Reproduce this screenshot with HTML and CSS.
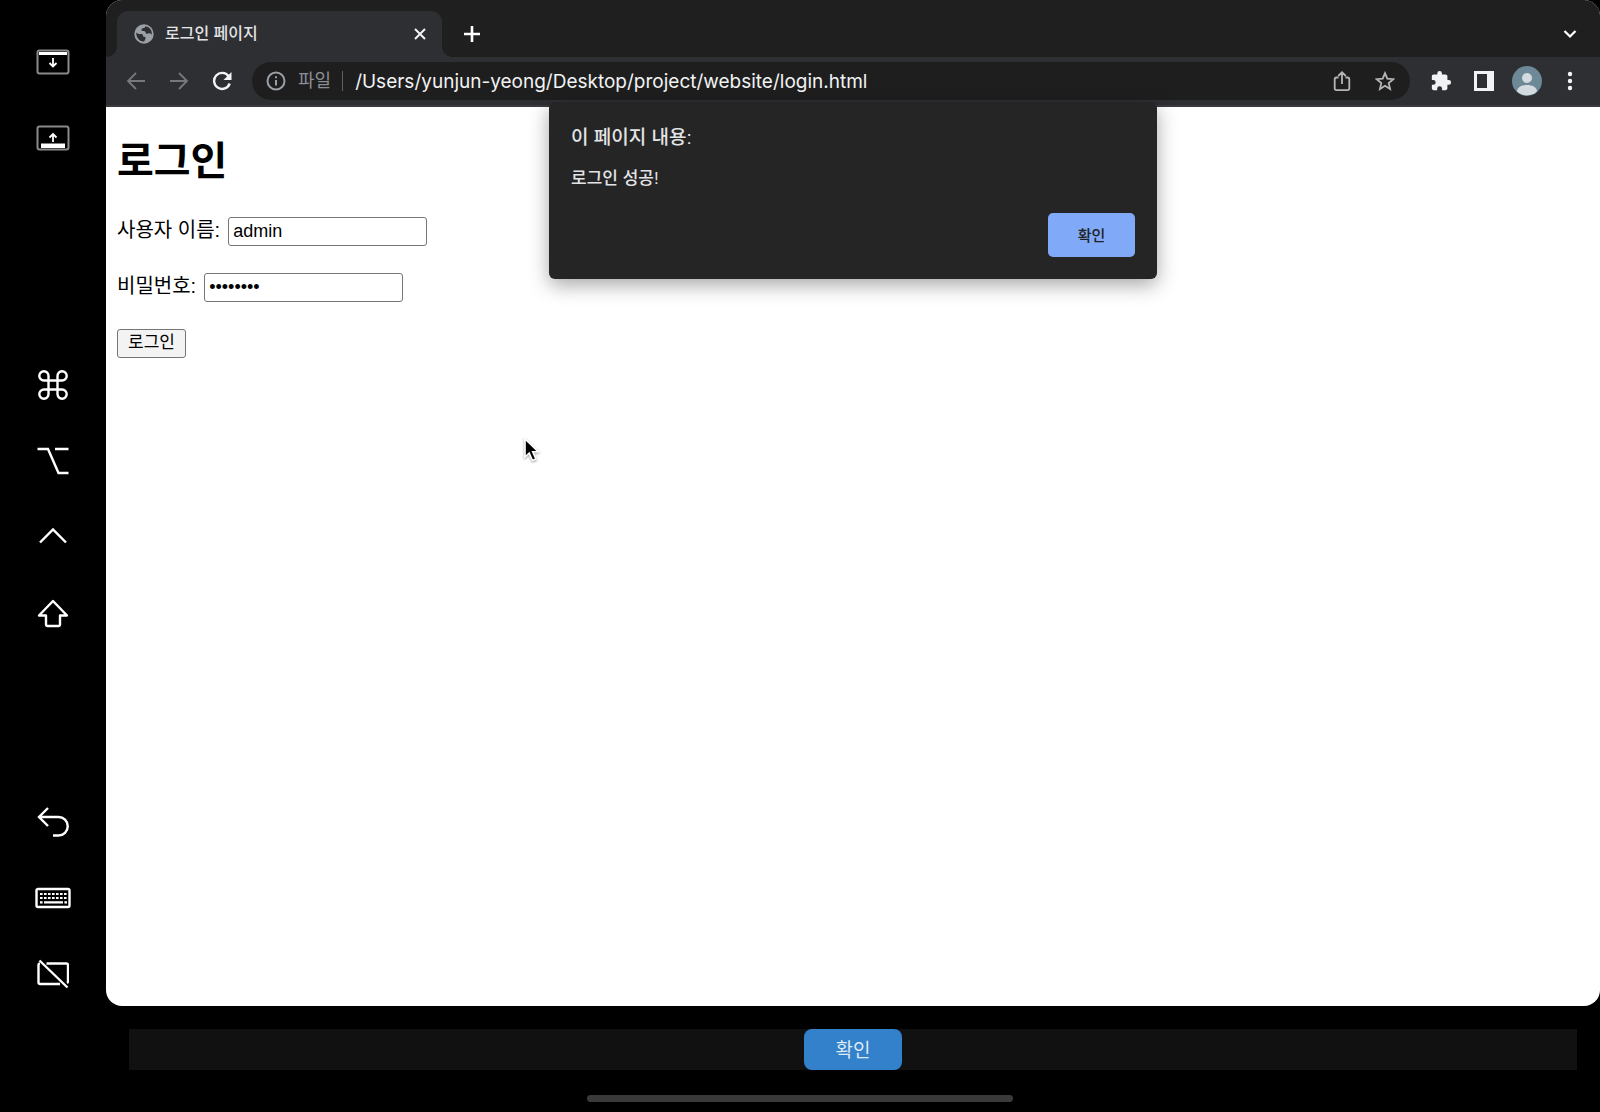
FILE: index.html
```html
<!DOCTYPE html>
<html lang="ko">
<head>
    <meta charset="UTF-8">
    <meta name="viewport" content="width=device-width, initial-scale=1.0">
    <title>로그인 페이지</title>
    <link rel="stylesheet" href="styles.css">
</head>
<body>
    <div class="device">
        <nav class="sidebar">
            <div class="key-group">
                <button class="key" aria-label="메뉴 막대">
                    <svg width="34" height="26" viewBox="0 0 34 26" fill="none">
                        <rect x="1.5" y="1.5" width="31" height="23" rx="2" stroke="#8a8a8a" stroke-width="2"/>
                        <path d="M3 3h28v3H3z" fill="#fff"/>
                        <path d="M17 9v8M13.5 14l3.500 3.500 3.500-3.500" stroke="#fff" stroke-width="1.8"/>
                    </svg>
                </button>
                <button class="key" aria-label="Dock">
                    <svg width="34" height="26" viewBox="0 0 34 26" fill="none">
                        <rect x="1.500" y="1.500" width="31" height="23" rx="2" stroke="#8a8a8a" stroke-width="2"/>
                        <path d="M5 18.500h24v4.500H5z" fill="#fff"/>
                        <path d="M17 17V9M13.500 12.500L17 9l3.500 3.500" stroke="#fff" stroke-width="1.8"/>
                    </svg>
                </button>
            </div>
            <div class="key-group modifiers">
                <button class="key" aria-label="Command">
                    <svg width="32" height="32" viewBox="0 0 32 32" fill="none" stroke="#fff" stroke-width="2.4">
                        <path d="M11.500 11.500h9v9h-9zM11.500 11.500H7A4.600 4.600 0 1 1 11.500 7zM20.500 11.500V7a4.600 4.600 0 1 1 4.500 4.500zM20.500 20.500H25a4.600 4.600 0 1 1-4.500 4.500zM11.500 20.500V25A4.600 4.600 0 1 1 7 20.500z"/>
                    </svg>
                </button>
                <button class="key" aria-label="Option">
                    <svg width="32" height="30" viewBox="0 0 32 30" fill="none" stroke="#fff" stroke-width="2.4">
                        <path d="M.5 3h10.500l10.500 24h10M18 3h13.500"/>
                    </svg>
                </button>
                <button class="key" aria-label="Control">
                    <svg width="28" height="20" viewBox="0 0 28 20" fill="none" stroke="#fff" stroke-width="2.4">
                        <path d="M1 15.500L14 2.500l13 13"/>
                    </svg>
                </button>
                <button class="key" aria-label="Shift">
                    <svg width="32" height="30" viewBox="0 0 32 30" fill="none" stroke="#fff" stroke-width="2.4" stroke-linejoin="round">
                        <path d="M16 3L30 17.500h-7V26.500a1.500 1.500 0 0 1-1.500 1.500h-11A1.500 1.500 0 0 1 9 26.500v-9H2z"/>
                    </svg>
                </button>
            </div>
            <div class="key-group tools">
                <button class="key" aria-label="실행 취소">
                    <svg width="32" height="32" viewBox="0 0 32 32" fill="none" stroke="#fff" stroke-width="2.4">
                        <path d="M11 2L2 11l9 9M2 11h19.500a9 9 0 0 1 0 18.500H16"/>
                    </svg>
                </button>
                <button class="key" aria-label="키보드">
                    <svg width="36" height="22" viewBox="0 0 36 22" fill="none" stroke="#fff">
                        <rect x="1.500" y="2" width="33" height="18" rx="1.500" stroke-width="2.4"/>
                        <path d="M5 7h27M5 11h27" stroke-width="2.200" stroke-dasharray="2.600 1.400"/>
                        <path d="M5 15.300h2.600M9 15.300h19M29.400 15.300H32" stroke-width="2.200"/>
                    </svg>
                </button>
                <button class="key" aria-label="화면 연결 해제">
                    <svg width="32" height="30" viewBox="0 0 32 30" fill="none" stroke="#fff" stroke-width="2.4">
                        <path d="M9.500 4.500H29.500a1.500 1.500 0 0 1 1.500 1.500V22a2 2 0 0 1-1 2M23 25H3a1.500 1.500 0 0 1-1.500-1.500V6A1.500 1.500 0 0 1 3 4.500M2.500 1.500l28 27"/>
                    </svg>
                </button>
            </div>
        </nav>

        <div class="main">
            <div class="browser">
                <div class="tab-strip">
                    <div class="tab">
                        <svg width="20" height="20" viewBox="0 0 20 20">
                            <circle cx="10" cy="10" r="9.700" fill="#9aa0a6"/>
                            <path d="M2.200 8.500c1.500 1.400 3 1.700 4.800 1.600 1 0 1.800.4 1.900 1.400 0 1 .6 1.300 1.600 1.300.9.100 1.200.7 1 1.600-.2 1.100-.9 1.600-1.300 3.200C5.500 17.500 2.200 14 2.200 8.500zM11.500 2.300c-.3 1.300-1.200 1.900-2.600 2-1.300.1-1.500 1-1.300 1.900.2.800 1.200.8 2.200.8 1.300 0 1.700.8 2 1.900.3 1 1.400 1 2.300.6 1.200-.5 2.200-.3 3.700 1.200C18.300 6.500 15.700 3 11.500 2.300z" fill="#2e2f33"/>
                        </svg>
                        <span class="tab-title">로그인 페이지</span>
                        <button class="icon-btn tab-close" aria-label="탭 닫기">
                            <svg width="12" height="12" viewBox="0 0 12 12" stroke="#f1f3f4" stroke-width="2"><path d="M1 1l10 10M11 1L1 11"/></svg>
                        </button>
                    </div>
                    <button class="icon-btn new-tab" aria-label="새 탭">
                        <svg width="18" height="18" viewBox="0 0 18 18" stroke="#fff" stroke-width="2.600"><path d="M9 1v16M1 9h16"/></svg>
                    </button>
                    <button class="icon-btn tab-search" aria-label="탭 검색">
                        <svg width="14" height="10" viewBox="0 0 14 10" fill="none" stroke="#fff" stroke-width="2.200"><path d="M1.500 2L7 7.500 12.500 2"/></svg>
                    </button>
                </div>

                <div class="toolbar">
                    <button class="icon-btn tool" aria-label="뒤로">
                        <svg width="20" height="20" viewBox="0 0 20 20" fill="none" stroke="#77787b" stroke-width="1.800"><path d="M19 10H2M10 2L2 10l8 8"/></svg>
                    </button>
                    <button class="icon-btn tool" aria-label="앞으로">
                        <svg width="20" height="20" viewBox="0 0 20 20" fill="none" stroke="#77787b" stroke-width="1.800"><path d="M1 10h17M10 2l8 8-8 8"/></svg>
                    </button>
                    <button class="icon-btn tool" aria-label="새로고침">
                        <svg width="20" height="20" viewBox="0 0 20 20" fill="none"><path d="M16.600 5.200A8 8 0 1 0 17.700 12.500" stroke="#f1f3f4" stroke-width="2.400"/><path d="M19.500 1v8h-8z" fill="#f1f3f4"/></svg>
                    </button>
                    <div class="omnibox">
                        <svg width="20" height="20" viewBox="0 0 20 20" fill="none" stroke="#9aa0a6" stroke-width="2"><circle cx="10" cy="10" r="8.500"/><path d="M10 9v5.500M10 5.300v2"/></svg>
                        <label class="scheme" for="address">파일</label>
                        <input class="address" id="address" type="text" value="/Users/yunjun-yeong/Desktop/project/website/login.html">
                        <button class="icon-btn tool" aria-label="공유">
                            <svg width="18" height="22" viewBox="0 0 18 22" fill="none" stroke="#b4b5b7" stroke-width="1.800"><path d="M5.500 7.500H3.500A1.800 1.800 0 0 0 1.700 9.300v9a1.800 1.800 0 0 0 1.800 1.800h11a1.800 1.800 0 0 0 1.800-1.800v-9a1.800 1.800 0 0 0-1.800-1.800h-2M9 14V2.500M5.200 6L9 2.200 12.800 6"/></svg>
                        </button>
                        <button class="icon-btn tool" aria-label="북마크">
                            <svg width="20" height="20" viewBox="0 0 20 20" fill="none" stroke="#b4b5b7" stroke-width="1.800"><path d="M10 2.200l2.300 5.500 6 .5-4.600 3.900 1.400 5.900-5.100-3.200L4.900 18l1.400-5.900L1.700 8.200l6-.5z"/></svg>
                        </button>
                    </div>
                    <button class="icon-btn tool" aria-label="확장 프로그램">
                        <svg width="22" height="22" viewBox="0 0 24 24" fill="#f1f3f4"><path d="M20.500 11H19V7c0-1.100-.9-2-2-2h-4V3.500a2.500 2.500 0 0 0-5 0V5H4c-1.100 0-2 .9-2 2v3.800h1.500a2.700 2.700 0 0 1 0 5.400H2V20c0 1.100.9 2 2 2h3.800v-1.500a2.700 2.700 0 0 1 5.400 0V22H17c1.100 0 2-.9 2-2v-4h1.500a2.500 2.500 0 0 0 0-5z"/></svg>
                    </button>
                    <button class="icon-btn tool" aria-label="측면 패널">
                        <svg width="20" height="20" viewBox="0 0 20 20"><path d="M0 0h20v20H0zM3 3v14h10V3z" fill="#f1f3f4" fill-rule="evenodd"/></svg>
                    </button>
                    <button class="icon-btn tool" aria-label="프로필">
                        <svg width="30" height="30" viewBox="0 0 30 30"><circle cx="15" cy="15" r="15" fill="#6d8896"/><circle cx="15" cy="12" r="5" fill="#d3dbe0"/><path d="M5 25.500c0-4.500 5-6.500 10-6.500s10 2 10 6.500a15 15 0 0 1-20 0z" fill="#d3dbe0"/></svg>
                    </button>
                    <button class="icon-btn tool" aria-label="메뉴">
                        <svg width="6" height="20" viewBox="0 0 6 20" fill="#f1f3f4"><circle cx="3" cy="3" r="2.200"/><circle cx="3" cy="10" r="2.200"/><circle cx="3" cy="17" r="2.200"/></svg>
                    </button>
                </div>

                <div class="page">
                    <h1>로그인</h1>
                    <form class="login-form">
                        <div class="field">
                            <label for="username">사용자 이름:</label>
                            <input type="text" id="username" value="admin">
                        </div>
                        <div class="field">
                            <label for="password">비밀번호:</label>
                            <input type="password" id="password" value="password">
                        </div>
                        <button type="button" class="login-button">로그인</button>
                    </form>

                    <div class="alert" role="alertdialog" aria-labelledby="alertTitle">
                        <h2 id="alertTitle">이 페이지 내용:</h2>
                        <p>로그인 성공!</p>
                        <button type="button" class="alert-button">확인</button>
                    </div>

                    <svg class="cursor" width="18" height="28" viewBox="0 0 18 28">
                        <path d="M2 2v18l4.200-4 3.300 7.500 3.400-1.500-3.200-7.300h5.500z" fill="#000" stroke="#fff" stroke-width="1.600"/>
                    </svg>
                </div>
            </div>

            <div class="touch-bar">
                <button type="button" class="touch-button">확인</button>
            </div>
        </div>
    </div>
    <div class="home-indicator"></div>
</body>
</html>
```
FILE: styles.css
```css
:root {
    --strip-color: #1f1f1f;
    --toolbar-color: #2e2f33;
    --dialog-color: #252525;
    --text-light: #e3e4e6;
}

* {
    box-sizing: border-box;
}

body {
    margin: 0;
    min-height: 100vh;
    display: flex;
    flex-direction: column;
    background-color: #000;
    font-family: "Liberation Sans", "Noto Sans CJK KR", sans-serif;
}

button {
    font-family: inherit;
    cursor: pointer;
}

.device {
    flex: 1;
    display: flex;
}

/* sidebar */

.sidebar {
    width: 106px;
    flex-shrink: 0;
    padding-top: 24px;
}

.key-group {
    display: flex;
    flex-direction: column;
}

.modifiers {
    margin-top: 171px;
}

.tools {
    margin-top: 133px;
}

.key {
    height: 76px;
    padding: 0;
    border: none;
    background: none;
    display: flex;
    justify-content: center;
    align-items: center;
}

/* browser window */

.main {
    flex: 1;
    min-width: 0;
    display: flex;
    flex-direction: column;
}

.browser {
    flex: 1;
    display: flex;
    flex-direction: column;
    border-radius: 16px;
    overflow: hidden;
    background-color: #fff;
}

.icon-btn {
    padding: 0;
    border: none;
    background: none;
    display: flex;
    justify-content: center;
    align-items: center;
    flex-shrink: 0;
}

.tab-strip {
    height: 57px;
    padding: 11px 16px 0 11px;
    display: flex;
    background-color: var(--strip-color);
}

.tab {
    position: relative;
    width: 325px;
    padding: 0 10px 0 17px;
    display: flex;
    align-items: center;
    gap: 11px;
    border-radius: 11px 11px 0 0;
    background-color: var(--toolbar-color);
}

.tab::before,
.tab::after {
    content: "";
    position: absolute;
    bottom: 0;
    width: 11px;
    height: 11px;
}

.tab::before {
    right: 100%;
    background: radial-gradient(circle at 0 0, transparent 11px, var(--toolbar-color) 11px);
}

.tab::after {
    left: 100%;
    background: radial-gradient(circle at 100% 0, transparent 11px, var(--toolbar-color) 11px);
}

.tab-title {
    flex: 1;
    font-size: 16px;
    line-height: 20px;
    font-weight: 500;
    color: var(--text-light);
}

.tab-close {
    width: 24px;
    height: 24px;
}

.new-tab {
    width: 28px;
    margin-left: 16px;
}

.tab-search {
    width: 28px;
    margin-left: auto;
}

.toolbar {
    height: 50px;
    padding: 0 9px 0 8px;
    display: flex;
    align-items: center;
    background-color: var(--toolbar-color);
    border-bottom: 2px solid #3a3b3f;
}

.tool {
    width: 43px;
    height: 38px;
}

.omnibox {
    flex: 1;
    min-width: 0;
    height: 38px;
    margin: 0 9px;
    padding: 0 4px 0 14px;
    display: flex;
    align-items: center;
    border-radius: 19px;
    background-color: #1e1e1e;
}

.scheme {
    margin-left: 12px;
    padding-right: 11px;
    border-right: 1px solid #5f6064;
    font-size: 18px;
    line-height: 20px;
    color: #8b8f95;
}

.address {
    flex: 1;
    min-width: 0;
    padding: 0 0 0 12px;
    border: none;
    outline: none;
    background: none;
    font-family: Inter, sans-serif;
    font-size: 19px;
    color: #f1f3f4;
}

/* page content */

.page {
    position: relative;
    flex: 1;
    padding: 24px 11px;
    color: #000;
}

.page h1 {
    margin: 0;
    font-size: 40px;
    line-height: 60px;
    font-weight: bold;
}

.login-form {
    margin-top: 26px;
    display: flex;
    flex-direction: column;
    align-items: flex-start;
    gap: 27px;
}

.field {
    height: 29px;
    display: flex;
    align-items: center;
    gap: 8px;
}

.field label {
    padding-bottom: 4px;
    font-size: 20px;
    line-height: 24px;
}

.field input {
    width: 199px;
    height: 29px;
    padding: 0 4px;
    border: 1px solid #767676;
    border-radius: 3px;
    font-family: "Liberation Sans", sans-serif;
    font-size: 18px;
}

.login-button {
    height: 29px;
    padding: 0 10px 2px;
    border: 1px solid #767676;
    border-radius: 3px;
    background-color: #f3f3f3;
    font-size: 17px;
    line-height: 20px;
    color: #000;
}

/* alert */

.alert {
    position: absolute;
    top: -5px;
    left: 50%;
    transform: translateX(-50%);
    width: 608px;
    padding: 22px;
    display: flex;
    flex-direction: column;
    border-radius: 6px;
    background-color: var(--dialog-color);
    box-shadow: 0 6px 20px rgba(0, 0, 0, 0.35);
    color: var(--text-light);
}

.alert h2 {
    margin: 0;
    font-size: 19px;
    line-height: 28px;
    font-weight: 500;
}

.alert p {
    margin: 15px 0 22px;
    font-size: 17px;
    line-height: 24px;
    font-weight: 500;
}

.alert-button {
    align-self: flex-end;
    width: 87px;
    height: 44px;
    padding: 0 0 2px;
    border: none;
    border-radius: 5px;
    background-color: #80aaf7;
    font-size: 15px;
    font-weight: 500;
    color: #202124;
}

.cursor {
    position: absolute;
    top: 330px;
    left: 417px;
    filter: drop-shadow(0 1px 1px rgba(0, 0, 0, 0.4));
}

/* touch bar */

.touch-bar {
    margin: 23px 23px 0;
    display: flex;
    justify-content: center;
    background-color: #111;
}

.touch-button {
    width: 98px;
    height: 41px;
    padding: 0 0 2px;
    border: none;
    border-radius: 8px;
    background-color: #3381cb;
    font-size: 19px;
    color: #dfe9f3;
}

.home-indicator {
    width: 426px;
    height: 7px;
    margin: 25px auto 10px;
    border-radius: 4px;
    background-color: #3a3a3a;
}
```
